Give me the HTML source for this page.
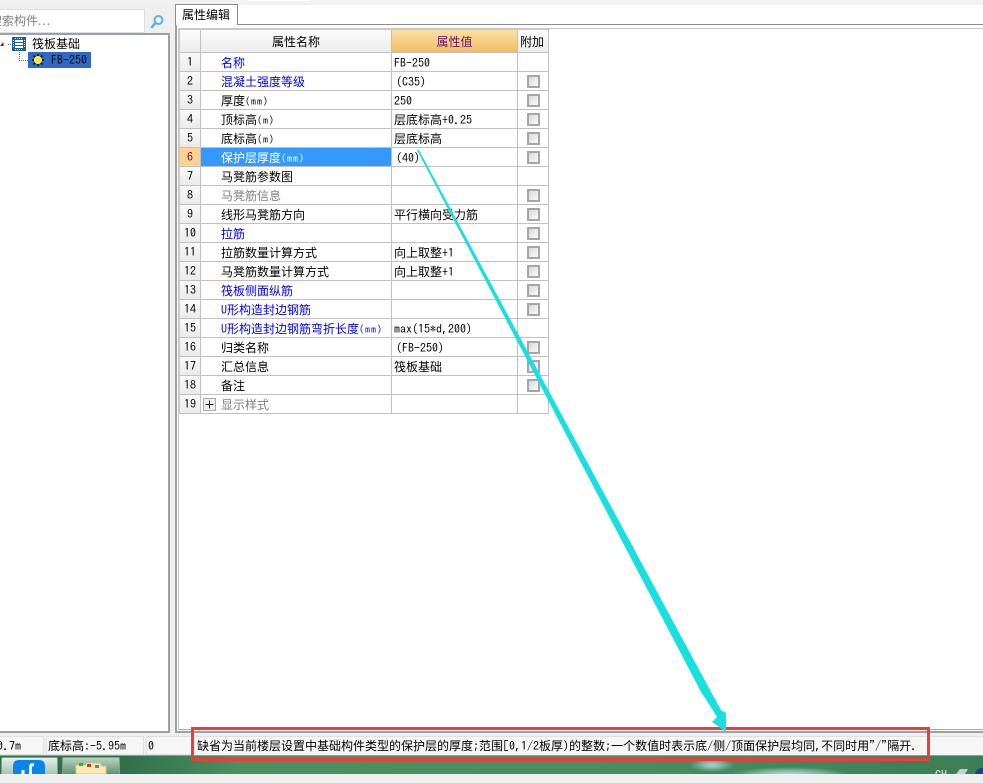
<!DOCTYPE html>
<html lang="zh">
<head>
<meta charset="utf-8">
<title>属性编辑</title>
<style>
html,body{margin:0;padding:0;}
body{width:983px;height:774px;overflow:hidden;position:relative;background:#f0f0f0;font:12px/16px "WenQuanYi Zen Hei","Noto Sans CJK SC",sans-serif;color:#000;}
.a{position:absolute;box-sizing:border-box;}
.m{font-family:"IPAGothic","Liberation Mono",monospace;}
.u{font-family:"IPAGothic","Liberation Mono",monospace;font-size:10px;letter-spacing:1px;}
table{position:absolute;left:180px;top:30px;border-collapse:separate;border-spacing:0;table-layout:fixed;width:369px;}
tr{height:19px;}
tr.h{height:23px;}
td,th{box-sizing:border-box;height:19px;padding:0;border-right:1px solid #c0c0c0;border-bottom:1px solid #c0c0c0;font-weight:normal;line-height:12px;white-space:nowrap;overflow:hidden;text-align:left;vertical-align:middle;}
tr.h th{height:23px;padding-top:2px;background:linear-gradient(#fdfdfd,#ececec);text-align:center;}
tr.h th.v{background:linear-gradient(#fbdfa6,#f2c062);color:#60106f;}
tr.h th:last-child{padding-right:2px;}
td.i{background:linear-gradient(#fafafa,#ebebeb);text-align:center;}
td.n{padding-left:20px;padding-top:2px;}
td.v{padding-left:2px;padding-top:1px;}
td.p{padding-left:4px;}
.b{color:#0000f0;}
.g{color:#808080;}
td.c{text-align:center;line-height:0;}
.k{display:inline-block;width:13px;height:13px;box-sizing:border-box;border:2px solid #a6a6a6;background:linear-gradient(135deg,#d8d8d8,#fbfbfb);vertical-align:middle;}
tr.s td.i{background:#fdd394;color:#7a0020;}
tr.s td.n{background:#3399ff;color:#fff;}
</style>
</head>
<body>
<!-- top strip and left panel -->
<div class="a" style="left:0;top:0;width:983px;height:4px;background:#f2f2f2"></div>
<div class="a" style="left:248px;top:0;width:62px;height:1px;background:#fff"></div>
<div class="a" style="left:0;top:9px;width:145px;height:24px;background:#fff;border:1px solid #d6e0e6;border-left:0;overflow:hidden"><div class="a" style="left:-10px;top:3px;color:#808080;white-space:nowrap">搜索构件<span style="letter-spacing:1px">...</span></div></div>
<svg class="a" style="left:150px;top:14px" width="15" height="15" viewBox="0 0 15 15"><circle cx="8.500" cy="6" r="4" fill="#eef8fe" stroke="#5cb0ec" stroke-width="2"/><path d="M5.500 9L2 13" stroke="#5cb0ec" stroke-width="2.600" stroke-linecap="round"/></svg>
<div class="a" style="left:0;top:33px;width:170px;height:700px;background:#fff;border-top:2px solid #a0a0a0;border-right:2px solid #a0a0a0;border-bottom:2px solid #a0a0a0"></div>
<!-- tree -->
<svg class="a" style="left:0;top:38px" width="30" height="30" viewBox="0 0 30 30"><path d="M0 8L3.500 4V8Z" fill="#333"/><path d="M8 6.500H12M19.500 14V22.500H28" stroke="#666" stroke-dasharray="1 1" fill="none"/></svg>
<svg class="a" style="left:12px;top:37px" width="14" height="14" viewBox="0 0 14 14"><rect width="14" height="14" fill="#1d5f9f"/><rect x="3" y="3" width="8" height="8" fill="#fff"/><path d="M3 5.500H11M3 8.500H11" stroke="#1d5f9f" fill="none"/><path d="M1.500 3V11M12.500 3V11M3 1.500H11M3 12.500H11" stroke="#cfe0f0" stroke-dasharray="1 1" fill="none"/></svg>
<div class="a" style="left:32px;top:36px;white-space:nowrap">筏板基础</div>
<div class="a" style="left:28px;top:52px;width:63px;height:16px;background:#2f69c3"></div>
<svg class="a" style="left:32px;top:54px" width="12" height="12" viewBox="0 0 12 12"><path d="M6 0V12M0 6H12M1.500 1.500L10.500 10.500M10.500 1.500L1.500 10.500" stroke="#1a1a10" stroke-width="1.800"/><circle cx="6" cy="6" r="4" fill="#f8ee30"/><circle cx="6" cy="6" r="1.700" fill="#d8c820"/><path d="M6 2V10M2 6H10" stroke="#fff59a" stroke-width=".8"/></svg>
<div class="a m" style="left:51px;top:52px;white-space:nowrap;color:#0a0a0a">FB-250</div>
<!-- right panel -->
<div class="a" style="left:175px;top:4px;width:808px;height:729px;background:#fff;border-left:2px solid #a0a0a0;border-bottom:2px solid #a0a0a0"></div>
<div class="a" style="left:177px;top:4px;width:806px;height:1px;background:#f0f0f0"></div>
<div class="a" style="left:177px;top:24px;width:806px;height:1px;background:#8c8c8c"></div>
<div class="a" style="left:175px;top:4px;width:63px;height:21px;background:#fff;border:1px solid #8c8c8c;border-bottom:0;padding:2px 0 0 6px;white-space:nowrap">属性编辑</div>
<div class="a" style="left:178px;top:28px;width:805px;height:702px;border:1px solid #c8c8c8;border-right:0;border-bottom:1px solid #a8a8a8"></div>
<div class="a" style="left:179px;top:29px;width:371px;height:385px;border:1px solid #c8c8c8;border-right:0;border-bottom:0"></div>
<table>
<colgroup><col style="width:21px"><col style="width:191px"><col style="width:126px"><col style="width:31px"></colgroup>
<tr class="h"><th></th><th>属性名称</th><th class="v">属性值</th><th>附加</th></tr>
<tr><td class="i m">1</td><td class="n b">名称</td><td class="v m">FB-250</td><td class="c"></td></tr>
<tr><td class="i m">2</td><td class="n b">混凝土强度等级</td><td class="v p m">(C35)</td><td class="c"><i class="k"></i></td></tr>
<tr><td class="i m">3</td><td class="n">厚度<span class="u">(mm)</span></td><td class="v m">250</td><td class="c"><i class="k"></i></td></tr>
<tr><td class="i m">4</td><td class="n">顶标高<span class="u">(m)</span></td><td class="v">层底标高<span class="m">+0.25</span></td><td class="c"><i class="k"></i></td></tr>
<tr><td class="i m">5</td><td class="n">底标高<span class="u">(m)</span></td><td class="v">层底标高</td><td class="c"><i class="k"></i></td></tr>
<tr class="s"><td class="i m">6</td><td class="n">保护层厚度<span class="u">(mm)</span></td><td class="v p m">(40)</td><td class="c"><i class="k"></i></td></tr>
<tr><td class="i m">7</td><td class="n">马凳筋参数图</td><td></td><td class="c"></td></tr>
<tr><td class="i m">8</td><td class="n g">马凳筋信息</td><td></td><td class="c"><i class="k"></i></td></tr>
<tr><td class="i m">9</td><td class="n">线形马凳筋方向</td><td class="v">平行横向受力筋</td><td class="c"><i class="k"></i></td></tr>
<tr><td class="i m">10</td><td class="n b">拉筋</td><td></td><td class="c"><i class="k"></i></td></tr>
<tr><td class="i m">11</td><td class="n">拉筋数量计算方式</td><td class="v">向上取整<span class="m">+1</span></td><td class="c"><i class="k"></i></td></tr>
<tr><td class="i m">12</td><td class="n">马凳筋数量计算方式</td><td class="v">向上取整<span class="m">+1</span></td><td class="c"><i class="k"></i></td></tr>
<tr><td class="i m">13</td><td class="n b">筏板侧面纵筋</td><td></td><td class="c"><i class="k"></i></td></tr>
<tr><td class="i m">14</td><td class="n b"><span class="m">U</span>形构造封边钢筋</td><td></td><td class="c"><i class="k"></i></td></tr>
<tr><td class="i m">15</td><td class="n b"><span class="m">U</span>形构造封边钢筋弯折长度<span class="u">(mm)</span></td><td class="v m">max(15*d,200)</td><td class="c"></td></tr>
<tr><td class="i m">16</td><td class="n">归类名称</td><td class="v p m">(FB-250)</td><td class="c"><i class="k"></i></td></tr>
<tr><td class="i m">17</td><td class="n">汇总信息</td><td class="v">筏板基础</td><td class="c"><i class="k"></i></td></tr>
<tr><td class="i m">18</td><td class="n">备注</td><td></td><td class="c"><i class="k"></i></td></tr>
<tr><td class="i m">19</td><td class="n g">显示样式</td><td></td><td class="c"></td></tr>
</table>
<svg class="a" style="left:203px;top:398px" width="13" height="13" viewBox="0 0 13 13"><rect x=".5" y=".5" width="12" height="12" fill="#eee" stroke="#aaa"/><path d="M2.500 6.500H10.500M6.500 2.500V10.500" stroke="#222"/></svg>
<!-- status bar -->
<div class="a" style="left:0;top:733px;width:983px;height:23px;background:#f0f0f0;border-bottom:1px solid #9a9a9a"></div>
<div class="a" style="left:-2px;top:736px;width:46px;height:19px;background:#f6f6f6;border:1px solid #e0e0e0"></div>
<div class="a" style="left:46px;top:736px;width:98px;height:19px;background:#f6f6f6;border:1px solid #e0e0e0"></div>
<div class="a" style="left:146px;top:736px;width:46px;height:19px;background:#f6f6f6;border:1px solid #e0e0e0"></div>
<div class="a" style="left:195px;top:736px;width:788px;height:19px;background:#f6f6f6;border-top:1px solid #e0e0e0"></div>
<div class="a m" style="left:-3px;top:738px;white-space:nowrap">0.7m</div>
<div class="a" style="left:48px;top:738px;white-space:nowrap">底标高<span class="m">:-5.95m</span></div>
<div class="a m" style="left:148px;top:738px;white-space:nowrap">0</div>
<div class="a" style="left:197px;top:738px;white-space:nowrap">缺省为当前楼层设置中基础构件类型的保护层的厚度<span class="m">;</span>范围<span class="m">[0,1/2</span>板厚<span class="m">)</span>的整数<span class="m">;</span>一个数值时表示底<span class="m">/</span>侧<span class="m">/</span>顶面保护层均同<span class="m">,</span>不同时用<span class="m">"/"</span>隔开<span class="m">.</span></div>
<!-- taskbar -->
<div class="a" style="left:0;top:756px;width:983px;height:18px;background:radial-gradient(ellipse 22px 7px at 712px 9px,rgba(190,225,235,.85) 0,rgba(160,210,215,.5) 55%,rgba(80,140,95,0) 100%),radial-gradient(ellipse 60px 8px at 790px 19px,rgba(205,232,240,.9) 0,rgba(170,215,215,.6) 55%,rgba(80,140,95,0) 100%),linear-gradient(90deg,#2f6f4a 120px,#4b9160 240px,#478d5e 650px,#3a7f55 100%)"></div>
<div class="a" style="left:1px;top:757px;width:57px;height:17px;background:linear-gradient(#e4efe8,#a9c4b2);border:1px solid #7f9f8a;border-bottom:0;border-radius:2px 2px 0 0"></div>
<div class="a" style="left:62px;top:757px;width:58px;height:17px;background:linear-gradient(#b8d2c0,#5f9474);border:1px solid #7f9f8a;border-bottom:0;border-radius:2px 2px 0 0"></div>
<svg class="a" style="left:13px;top:760px" width="32" height="14" viewBox="0 0 32 14"><path d="M0 14V6Q0 0 6 0H26Q32 0 32 6V14Z" fill="#0a84e8"/><path d="M10 14V10M17.500 14V7Q17.500 4 21 5" stroke="#fff" stroke-width="3" fill="none"/></svg>
<svg class="a" style="left:75px;top:762px" width="32" height="12" viewBox="0 0 32 12"><path d="M1 12V3H10L12 1H26V4H31V12Z" fill="#fbe9b0" stroke="#d8c27a"/><rect x="4" y="1" width="4" height="3" fill="#2fae4a"/><rect x="12" y="2" width="4" height="3" fill="#b8402a"/><rect x="20" y="3" width="4" height="3" fill="#3a8ed8"/></svg>
<div class="a m" style="left:935px;top:767px;color:#eee;font-size:12px">CH</div>
<svg class="a" style="left:955px;top:766px" width="28" height="8" viewBox="0 0 28 8"><path d="M1 8L5 3H13L10 8Z" fill="#c8d2cc"/><circle cx="27" cy="9" r="7" fill="#1d3f90"/></svg>
<!-- annotation -->
<div class="a" style="left:191px;top:727px;width:739px;height:34px;border:3px solid #f23a3a"></div>
<svg class="a" style="left:0;top:0;pointer-events:none" width="983" height="774" viewBox="0 0 983 774"><polygon points="417,150 419,150 710,690 721,710 726,713 726,732 712,722 717,717 700,690" fill="#19dfe0"/></svg>
</body>
</html>
